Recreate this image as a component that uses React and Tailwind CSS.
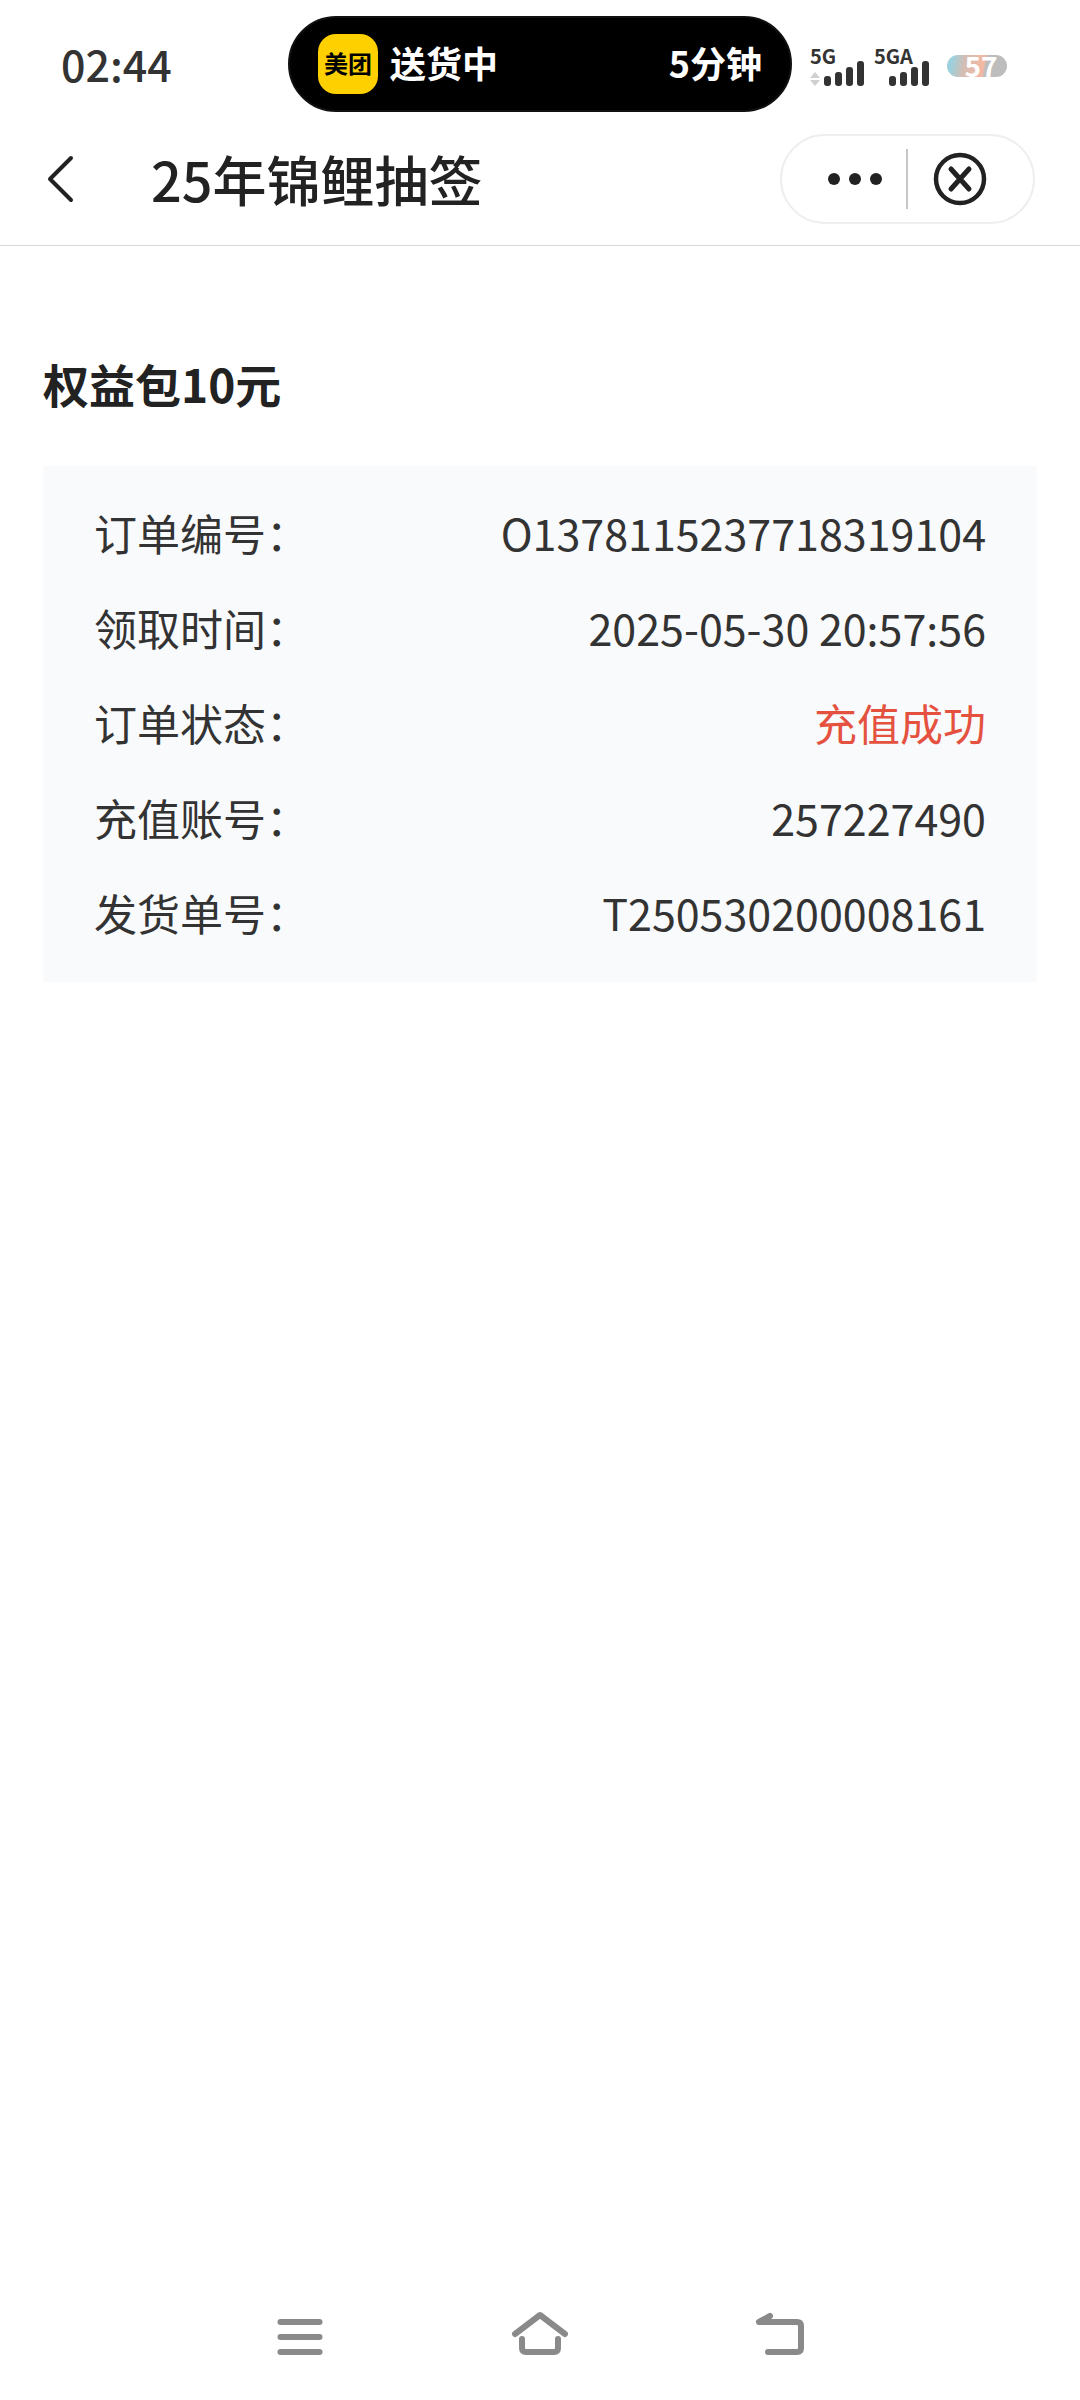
import React from 'react';

const orderRows = [
  { label: '订单编号', value: 'O1378115237718319104' },
  { label: '领取时间', value: '2025-05-30 20:57:56' },
  { label: '订单状态', value: '充值成功', highlight: true },
  { label: '充值账号', value: '257227490' },
  { label: '发货单号', value: 'T250530200008161' },
];

const SignalBars = () => (
  <svg width="40" height="25" viewBox="0 0 40 25" fill="#333333" aria-hidden="true">
    <rect x="0" y="15" width="7" height="10" rx="3" />
    <rect x="11" y="11" width="7" height="14" rx="3" />
    <rect x="22" y="6" width="7" height="19" rx="3" />
    <rect x="33" y="0" width="7" height="25" rx="3" />
  </svg>
);

const StatusBar = () => (
  <div className="flex items-start h-[134px] pt-4">
    <div className="w-[288px] h-24 pl-[61px] pb-[2px] flex items-center text-[43px] font-medium text-[#333333]">
      02:44
    </div>

    {/* Live activity pill */}
    <div className="flex-1 h-24 pl-7 pr-7 flex items-center rounded-full bg-black border-2 border-[#111111] text-white text-[36px] leading-none font-bold">
      <div className="w-[60px] h-[60px] rounded-[18px] bg-[#ffd000] text-black text-[24px] flex items-center justify-center pb-[2px]">
        美团
      </div>
      <span className="ml-3 pb-1">送货中</span>
      <span className="ml-auto pb-1">5分钟</span>
    </div>

    <div className="w-[288px] h-24 pl-[18px] pt-1 flex items-center text-[#333333] text-[20px] font-bold">
      <div className="w-16 h-10 relative flex items-end">
        <span className="absolute left-0 top-0 leading-5">5G</span>
        <svg width="10" height="14" viewBox="0 0 10 14" fill="#d0d0d0" className="mr-1" aria-hidden="true">
          <path d="M5 0l5 6H0zM5 14l5-6H0z" />
        </svg>
        <SignalBars />
      </div>
      <div className="w-[73px] h-10 pl-[15px] relative flex items-end">
        <span className="absolute left-0 top-0 leading-5">5GA</span>
        <SignalBars />
      </div>
      <div className="w-[60px] h-[22px] rounded-full flex items-center justify-center pb-[2px] pl-2 bg-[linear-gradient(100deg,#9dd0dc_10%,#d5bdb2_30%,#f4b8a2_60%,#bdbdbd_64%)] text-white text-[28px] leading-none">
        57
      </div>
    </div>
  </div>
);

const Header = () => (
  <header className="flex items-start h-28 border-b border-[#d8d8d8]">
    <button aria-label="返回" className="h-[90px] w-[151px] pl-[47px] flex items-center">
      <svg width="28" height="48" viewBox="0 0 28 48" fill="none" stroke="#222222" strokeWidth="4" strokeLinecap="round" strokeLinejoin="round">
        <path d="M24 3L3 24l21 21" />
      </svg>
    </button>
    <h1 className="flex-1 h-[90px] flex items-center text-[54px] leading-none font-medium text-[#222222]">
      25年锦鲤抽签
    </h1>
    <div className="w-[255px] h-[90px] mr-[45px] flex items-center rounded-full border-2 border-[#eeeeee]">
      <button aria-label="更多" className="w-[124px] h-full pl-[22px] flex items-center justify-center">
        <svg width="56" height="12" viewBox="0 0 56 12" fill="#222222">
          <circle cx="7" cy="6" r="6" />
          <circle cx="28" cy="6" r="6" />
          <circle cx="49" cy="6" r="6" />
        </svg>
      </button>
      <span className="w-[2px] h-[60px] bg-[#c6c6c6]" />
      <button aria-label="关闭" className="flex-1 h-full pr-[22px] flex items-center justify-center">
        <svg width="54" height="54" viewBox="0 0 54 54" fill="none" stroke="#222222" strokeLinecap="round">
          <circle cx="27" cy="27" r="24" strokeWidth="4.5" />
          <path d="M18 17l18 20M36 17L18 37" strokeWidth="5" />
        </svg>
      </button>
    </div>
  </header>
);

const SystemNav = () => (
  <nav className="h-[130px] flex items-center justify-center gap-[180px] text-[#8a8a8a]">
    <button aria-label="最近任务">
      <svg width="60" height="60" viewBox="0 0 60 60" fill="none" stroke="currentColor" strokeWidth="6" strokeLinecap="round">
        <path d="M10.500 17h39M10.500 32h39M10.500 47h39" />
      </svg>
    </button>
    <button aria-label="主屏幕">
      <svg width="60" height="60" viewBox="0 0 60 60" fill="none" stroke="currentColor" strokeWidth="6" strokeLinecap="round" strokeLinejoin="round">
        <path d="M5 29L30 10l25 19" />
        <path d="M12 34v9q0 4 4 4h28q4 0 4-4v-9" />
      </svg>
    </button>
    <button aria-label="返回上一页">
      <svg width="60" height="60" viewBox="0 0 60 60" fill="none" stroke="currentColor" strokeWidth="6" strokeLinecap="round" strokeLinejoin="round">
        <path d="M20 11L9 17h38q4 0 4 4v22q0 4-4 4H18" />
      </svg>
    </button>
  </nav>
);

const App = () => {
  return (
    <div className="min-h-screen flex flex-col bg-white font-['Noto_Sans_CJK_SC',sans-serif]">
      <StatusBar />
      <Header />
      <main className="flex-1 px-[43px] pt-[104px]">
        <h2 className="text-[46px] leading-[66px] font-bold text-[#222222]">权益包10元</h2>
        <dl className="mt-[50px] px-[51px] pt-[19px] pb-[22px] bg-[#f9fafc] text-[43px] leading-[95px] text-[#333333]">
          {orderRows.map((row) => (
            <div key={row.label} className="flex justify-between">
              <dt>{row.label}：</dt>
              <dd className={row.highlight ? 'text-[#e4523f]' : ''}>{row.value}</dd>
            </div>
          ))}
        </dl>
      </main>
      <SystemNav />
    </div>
  );
};

export default App;
